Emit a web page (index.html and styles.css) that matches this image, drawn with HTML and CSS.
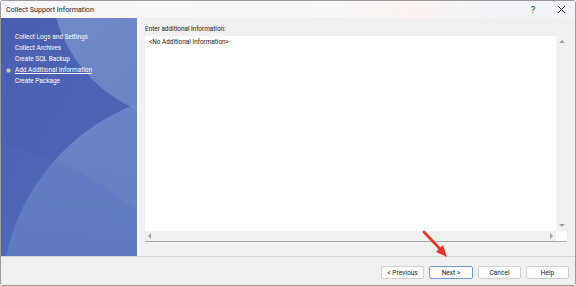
FILE: index.html
```html
<!DOCTYPE html>
<html>
<head>
<meta charset="utf-8">
<link rel="stylesheet" href="styles.css">
</head>
<body>
<div class="window">
  <div class="titlebar">
    <span class="title">Collect Support Information</span>
    <span class="tb-btn help">?</span>
    <span class="tb-btn close">
      <svg width="9" height="9" viewBox="0 0 9 9"><path d="M1 1L8 8M8 1L1 8" stroke="#222" stroke-width="1"/></svg>
    </span>
  </div>
  <div class="body">
    <div class="side">
      <svg class="side-bg" viewBox="0 0 136 237" preserveAspectRatio="none">
        <defs>
          <linearGradient id="g1" x1="0" y1="0" x2="1" y2="1">
            <stop offset="0" stop-color="#4a5fb1"/>
            <stop offset="1" stop-color="#5068b6"/>
          </linearGradient>
          <linearGradient id="g2" x1="0" y1="0" x2="1" y2="1">
            <stop offset="0" stop-color="#7c97d0"/>
            <stop offset="1" stop-color="#6783c5"/>
          </linearGradient>
          <linearGradient id="g3" x1="0" y1="0" x2="0" y2="1">
            <stop offset="0" stop-color="#6f8bca"/>
            <stop offset="1" stop-color="#5a74bd"/>
          </linearGradient>
        </defs>
        <rect width="136" height="237" fill="url(#g1)"/>
        <circle cx="190" cy="-38" r="140" fill="url(#g2)" opacity="0.85"/>
        <circle cx="210" cy="282" r="210" fill="url(#g3)" opacity="0.85"/>
        <circle cx="-60" cy="420" r="300" fill="#5470bc" opacity="0.25"/>
      </svg>
      <ul class="steps">
        <li>Collect Logs and Settings</li>
        <li>Collect Archives</li>
        <li>Create SQL Backup</li>
        <li class="current">Add Additional Information</li>
        <li>Create Package</li>
      </ul>
    </div>
    <div class="main">
      <div class="label">Enter additional information:</div>
      <div class="box">
        <div class="box-top">
          <div class="text">&lt;No Additional Information&gt;</div>
          <div class="vscroll">
            <span class="tri up"></span>
            <span class="tri down"></span>
          </div>
        </div>
        <div class="hscroll">
          <span class="tri left"></span>
          <span class="tri right"></span>
        </div>
      </div>
    </div>
  </div>
  <div class="footer">
    <button class="btn">&lt; Previous</button>
    <button class="btn default">Next &gt;</button>
    <button class="btn">Cancel</button>
    <button class="btn">Help</button>
  </div>
  <svg class="arrow" width="40" height="40" viewBox="0 0 40 40">
    <path d="M3 3L21 22" stroke="#e8322b" stroke-width="2.6" stroke-linecap="round"/>
    <path d="M26 28L15 23L22 16Z" fill="#e8322b"/>
  </svg>
</div>
</body>
</html>
```

FILE: styles.css
```css
html, body {
  margin: 0;
  padding: 0;
  background: #ffffff;
}

.window {
  position: relative;
  width: 576px;
  height: 286px;
  box-sizing: border-box;
  border: 1px solid #9a9a9a;
  border-radius: 3px;
  background: #f0f0f0;
  display: flex;
  flex-direction: column;
  font-family: Roboto, "Noto Sans", sans-serif;
  overflow: hidden;
}

.titlebar {
  height: 17px;
  flex: none;
  display: flex;
  align-items: center;
  background: linear-gradient(90deg, #f6f6fa 0%, #f8f6f6 60%, #fbf3ef 72%, #f3f4f8 85%, #f2f3f8 100%);
  padding-left: 5px;
}

.title {
  font-size: 7.15px;
  color: #1a1a1a;
  flex: 1;
}

.tb-btn {
  width: 28px;
  display: flex;
  justify-content: center;
  align-items: center;
  font-size: 8.5px;
  color: #222;
}

.body {
  flex: 1;
  display: flex;
  min-height: 0;
}

.side {
  position: relative;
  width: 136px;
  flex: none;
  border-right: 1px solid #f8f8f8;
  overflow: hidden;
}

.side-bg {
  position: absolute;
  left: 0;
  top: 0;
  width: 100%;
  height: 100%;
}

.steps {
  position: relative;
  list-style: none;
  margin: 0;
  padding: 14px 0 0 14px;
  color: #ffffff;
  font-size: 6.45px;
  line-height: 11px;
}

.steps li {
  position: relative;
  white-space: nowrap;
}

.steps li.current {
  text-decoration: underline;
}

.steps li.current::before {
  content: "";
  position: absolute;
  left: -8px;
  top: 4px;
  width: 3px;
  height: 3px;
  border-radius: 50%;
  background: #d9d2a0;
  box-shadow: 0 0 0 1px rgba(220, 220, 200, 0.4);
}

.main {
  flex: 1;
  display: flex;
  flex-direction: column;
  padding: 6px 8px 14px 6px;
  border-left: 1px solid #ffffff;
}

.label {
  font-size: 6.4px;
  color: #1a1a1a;
  line-height: 10px;
  height: 12px;
}

.box {
  flex: 1;
  display: flex;
  flex-direction: column;
  background: #ffffff;
  border-bottom: 1px solid #a8a8a8;
}

.box-top {
  flex: 1;
  display: flex;
}

.text {
  flex: 1;
  font-size: 6.4px;
  color: #1a1a1a;
  padding: 2px 0 0 4px;
  line-height: 9px;
}

.vscroll {
  width: 10px;
  background: #f0f0f0;
  position: relative;
  border-left: 1px solid #f6f6f6;
}

.hscroll {
  height: 10px;
  background: #f0f0f0;
  position: relative;
  margin-right: 11px;
}

.tri {
  position: absolute;
  width: 0;
  height: 0;
}

.tri.up {
  left: 2px;
  top: 4px;
  border-left: 3px solid transparent;
  border-right: 3px solid transparent;
  border-bottom: 3px solid #a0a0a0;
}

.tri.down {
  left: 2px;
  bottom: 4px;
  border-left: 3px solid transparent;
  border-right: 3px solid transparent;
  border-top: 3px solid #a0a0a0;
}

.tri.left {
  left: 3px;
  top: 2px;
  border-top: 3px solid transparent;
  border-bottom: 3px solid transparent;
  border-right: 3px solid #a0a0a0;
}

.tri.right {
  right: 3px;
  top: 2px;
  border-top: 3px solid transparent;
  border-bottom: 3px solid transparent;
  border-left: 3px solid #a0a0a0;
}

.footer {
  height: 29px;
  flex: none;
  box-sizing: border-box;
  border-top: 1px solid #d6d6d6;
  display: flex;
  justify-content: flex-end;
  align-items: flex-start;
  gap: 5px;
  padding: 9px 6px 0 0;
  background: #f0f0f0;
}

.btn {
  width: 43px;
  height: 13px;
  box-sizing: border-box;
  padding: 0;
  border: 1px solid #d0d0d0;
  border-radius: 2px;
  background: #fdfdfd;
  font-family: Roboto, "Noto Sans", sans-serif;
  font-size: 6.6px;
  color: #1a1a1a;
  line-height: 10px;
}

.btn.default {
  width: 44px;
  border-color: #6f9ad0;
}

.arrow {
  position: absolute;
  left: 420px;
  top: 228px;
}
```
